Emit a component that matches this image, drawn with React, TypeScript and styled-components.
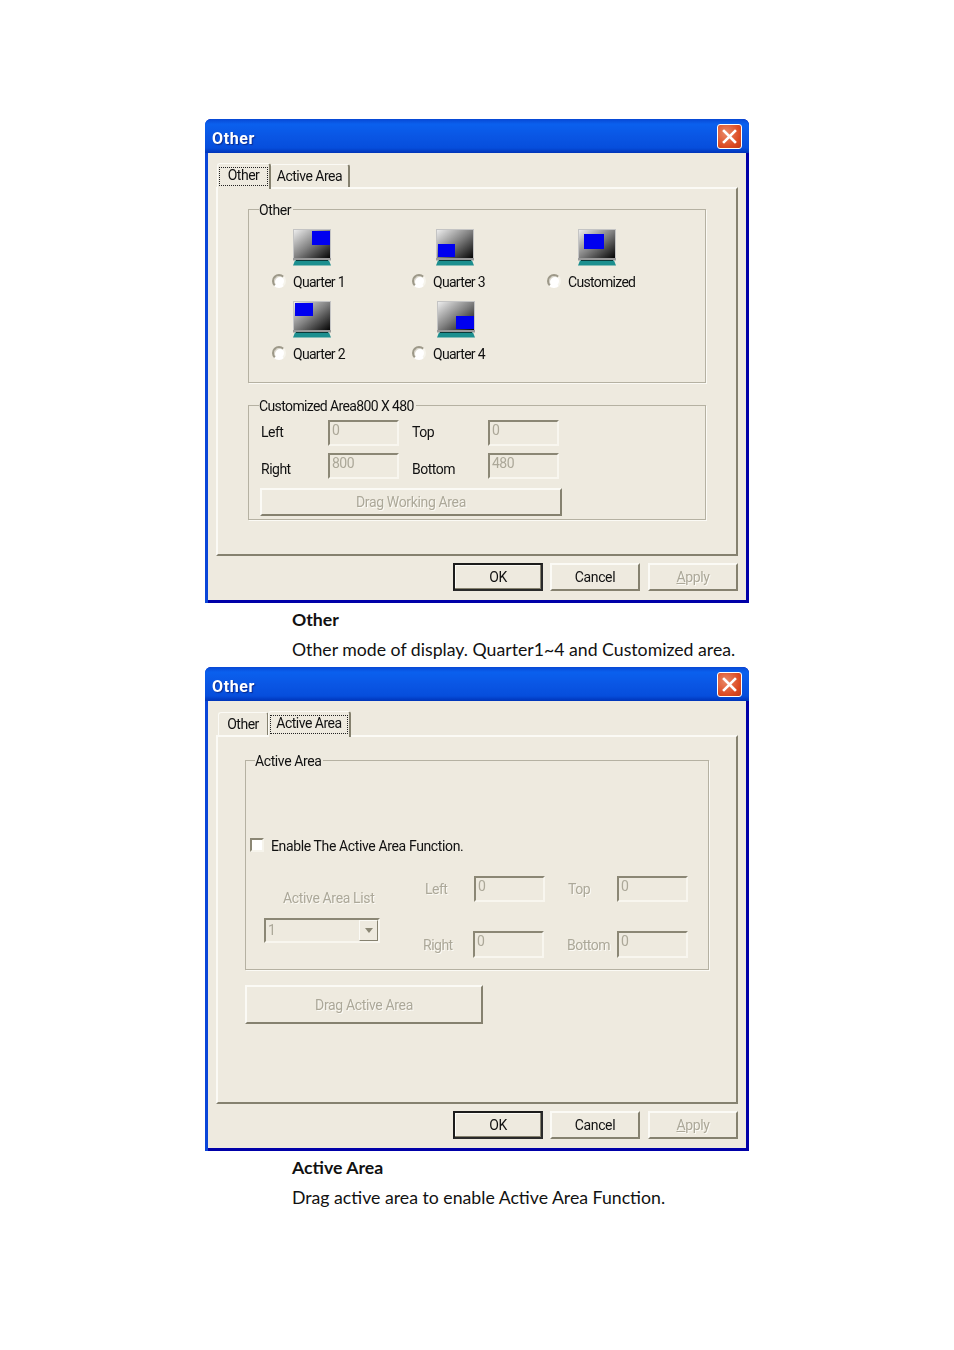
import React from "react";
import styled, { createGlobalStyle } from "styled-components";

const Global = createGlobalStyle`
  html, body { margin: 0; padding: 0; background: #fff; }
  #root { width: 954px; height: 1350px; overflow: hidden; }
`;

const FACE = "#eeeadf";
const SHADE = "#85816f";
const DIM = "#aca899";

const Page = styled.main`
  box-sizing: border-box;
  height: 1350px;
  padding: 119px 0 0 205px;
  font-family: Roboto, "Liberation Sans", sans-serif;
  letter-spacing: -0.5px;
  color: #111;
`;

const Dialog = styled.section`
  box-sizing: border-box;
  width: 544px;
  height: 484px;
  display: flex;
  flex-direction: column;
  border-radius: 6px 6px 0 0;
  background: linear-gradient(90deg, #0a45d8 0, #0a45d8 3px, #0000a8 3px);
  overflow: hidden;
  filter: blur(0.35px);
`;

const TitleBar = styled.header`
  flex: none;
  height: 34px;
  box-sizing: border-box;
  padding: 0 7px 0 7px;
  display: flex;
  align-items: center;
  justify-content: space-between;
  background: linear-gradient(180deg, #0848d4 0, #0a60ee 15%, #0a56e4 50%, #064edc 85%, #0034b8 100%);
`;

const Title = styled.h1`
  margin: 0;
  padding-top: 4px;
  font: bold 16px Roboto, "Liberation Sans", sans-serif;
  letter-spacing: 0.6px;
  color: #fff;
  text-shadow: 1px 1px 1px #0a2a90;
`;

const CloseButton = styled.button`
  width: 25px;
  height: 25px;
  padding: 0;
  border: 1px solid #fff;
  border-radius: 3px;
  background: radial-gradient(circle at 35% 35%, #ea8a68, #dc4a22 65%, #c03a18);
  display: grid;
  place-items: center;
`;

const Body = styled.div`
  flex: 1;
  box-sizing: border-box;
  margin: 0 3px 3px 3px;
  padding: 10px 8px 0 8px;
  background: ${FACE};
  display: flex;
  flex-direction: column;
`;

const Tabs = styled.div`
  flex: none;
  height: 24px;
  display: flex;
  align-items: flex-end;
  padding-left: 2px;
  position: relative;
  z-index: 1;
`;

const Tab = styled.div<{ $active?: boolean; $w: number }>`
  box-sizing: border-box;
  width: ${(p) => p.$w}px;
  height: ${(p) => (p.$active ? 26 : 23)}px;
  margin: 0 ${(p) => (p.$active ? -1 : 0)}px ${(p) => (p.$active ? -2 : 0)}px ${(p) => (p.$active ? -1 : 0)}px;
  padding: ${(p) => (p.$active ? "3px 1px 0" : "3px 0 0")};
  border: 1px solid #fbfaf5;
  border-bottom: 0;
  border-right: 2px solid ${SHADE};
  border-radius: 3px 3px 0 0;
  background: ${FACE};
  font-size: 14px;
  line-height: 16px;
  text-align: center;
  position: relative;
  z-index: ${(p) => (p.$active ? 2 : 1)};
`;

const Focus = styled.span`
  display: block;
  height: 19px;
  line-height: 15px;
  box-sizing: border-box;
  border: 1px dotted #222;
`;

const Panel = styled.div<{ $pad: string }>`
  flex: none;
  box-sizing: border-box;
  height: 369px;
  padding: ${(p) => p.$pad};
  border-style: solid;
  border-width: 2px;
  border-color: #fbfaf5 ${SHADE} ${SHADE} #fbfaf5;
`;

const Group = styled.fieldset<{ $w: number; $h: number; $pad: string; $gap?: number }>`
  box-sizing: border-box;
  display: block;
  min-width: 0;
  position: relative;
  width: ${(p) => p.$w}px;
  height: ${(p) => p.$h}px;
  margin: ${(p) => p.$gap ?? 0}px 0 0 0;
  padding: ${(p) => p.$pad};
  border: 1px solid #b5b1a2;
  box-shadow: 1px 1px 0 #fbfaf5;
`;

const Legend = styled.span<{ $left: number; $tight?: boolean }>`
  position: absolute;
  top: -8px;
  left: ${(p) => p.$left}px;
  padding-right: 2px;
  background: ${FACE};
  font-size: 14px;
  line-height: 16px;
  letter-spacing: ${(p) => (p.$tight ? "-0.62px" : "-0.4px")};
  white-space: nowrap;
`;

const OptionGrid = styled.div`
  display: grid;
  grid-template-columns: 140px 135px 120px;
  row-gap: 13px;
`;

const Option = styled.div`
  display: flex;
  flex-direction: column;
  gap: 8px;
`;

const IconSlot = styled.div<{ $x: number }>`
  height: 37px;
  padding-left: ${(p) => p.$x}px;
`;

const RadioRow = styled.label`
  display: flex;
  align-items: center;
  gap: 7px;
  height: 14px;
  font-size: 14px;
  letter-spacing: -0.7px;
`;

const RadioLabel = styled.span`
  position: relative;
  top: 1px;
`;

const Radio = styled.span`
  box-sizing: border-box;
  width: 14px;
  height: 14px;
  border-radius: 50%;
  background: #fff;
  border: 2px solid;
  border-color: #9c9888 #f6f4ec #fff #9c9888;
  box-shadow: inset 1px 1px 0 #d8d4c8;
`;

const CheckBox = styled.span`
  box-sizing: border-box;
  display: block;
  width: 14px;
  height: 14px;
  background: #fff;
  border: 2px solid;
  border-color: #8b8775 #f6f4ec #f6f4ec #8b8775;
`;

const CheckRow = styled.label`
  display: flex;
  align-items: center;
  gap: 7px;
  height: 14px;
  padding-left: 4px;
  font-size: 14px;
  letter-spacing: -0.37px;
`;

const CheckText = styled.span`
  position: relative;
  top: 1px;
`;

const FieldGrid = styled.div`
  display: grid;
  grid-template-columns: 67px 84px 76px 71px;
  grid-template-rows: 26px 26px;
  row-gap: 7px;
  align-items: center;
`;

const FieldLabel = styled.span<{ $down?: number; $dim?: boolean; $x?: number }>`
  font-size: 14px;
  position: relative;
  top: ${(p) => p.$down ?? 0}px;
  padding-left: ${(p) => p.$x ?? 0}px;
  color: ${(p) => (p.$dim ? DIM : "inherit")};
  text-shadow: ${(p) => (p.$dim ? "1px 1px 0 #fbfaf5" : "none")};
`;

const TextBox = styled.div<{ $x?: number; $h?: number }>`
  box-sizing: border-box;
  width: 71px;
  height: ${(p) => p.$h ?? 26}px;
  margin-left: ${(p) => p.$x ?? 0}px;
  padding: 0 0 0 2px;
  border: 2px solid;
  border-color: #8b8775 #f8f6ef #f8f6ef #8b8775;
  background: ${FACE};
  font-size: 14px;
  line-height: 17px;
  color: ${DIM};
`;

const RaisedButton = styled.div<{ $w: number; $h?: number; $dim?: boolean; $top?: number; $x?: number }>`
  box-sizing: border-box;
  width: ${(p) => p.$w}px;
  height: ${(p) => p.$h ?? 28}px;
  margin: ${(p) => p.$top ?? 0}px 0 0 ${(p) => p.$x ?? 0}px;
  display: flex;
  align-items: center;
  justify-content: center;
  border: 2px solid;
  border-color: #fbfaf5 ${SHADE} ${SHADE} #fbfaf5;
  font-size: 14px;
  letter-spacing: -0.35px;
  color: ${(p) => (p.$dim ? DIM : "#111")};
  text-shadow: ${(p) => (p.$dim ? "1px 1px 0 #fbfaf5" : "none")};
`;

const DefaultButton = styled(RaisedButton)`
  border-color: #1c1c1c #2a2a2a #2a2a2a #1c1c1c;
  box-shadow: inset -1px -1px 0 ${SHADE}, inset 1px 1px 0 #fbfaf5;
`;

const Footer = styled.div`
  flex: none;
  margin-top: 7px;
  display: flex;
  justify-content: flex-end;
  gap: 7px;
`;

const Underlined = styled.span`
  text-decoration: underline;
`;

const ActiveRow = styled.div`
  display: flex;
  margin: 24px 0 0 18px;
`;

const ListColumn = styled.div`
  width: 116px;
  flex: none;
  margin-right: 43px;
`;

const ListLabel = styled.div`
  margin: 14px 0 12px;
  padding-left: 19px;
  height: 16px;
  line-height: 16px;
  font-size: 14px;
  letter-spacing: -0.35px;
  white-space: nowrap;
  color: ${DIM};
  text-shadow: 1px 1px 0 #fbfaf5;
`;

const Combo = styled.div`
  box-sizing: border-box;
  width: 116px;
  height: 25px;
  padding: 0 0 0 2px;
  display: flex;
  justify-content: space-between;
  border: 2px solid;
  border-color: #8b8775 #f8f6ef #f8f6ef #8b8775;
  font-size: 14px;
  line-height: 20px;
  color: ${DIM};
`;

const ComboArrow = styled.span`
  box-sizing: border-box;
  width: 19px;
  height: 21px;
  display: grid;
  place-items: center;
  border: 1px solid;
  border-color: #fbfaf5 ${SHADE} ${SHADE} #fbfaf5;
  &::after {
    content: "";
    border: 4px solid transparent;
    border-top: 5px solid #8b8775;
    border-bottom: 0;
  }
`;

const AreaGrid = styled.div`
  display: grid;
  grid-template-columns: 50px 94px 50px 71px;
  grid-template-rows: 26px 27px;
  row-gap: 29px;
  align-items: center;
`;

const Caption = styled.div`
  box-sizing: border-box;
  height: 64px;
  padding: 2px 0 0 87px;
  font-family: Lato, "Open Sans", sans-serif;
  font-size: 17.7px;
  line-height: 29.5px;
  letter-spacing: 0;
  color: #111;
`;

const CaptionHead = styled.div`
  font-weight: 700;
`;

type Area = [number, number, number, number];

const Monitor = ({ area, id }: { area: Area; id: string }) => (
  <svg width="38" height="37" viewBox="0 0 38 37">
    <defs>
      <linearGradient id={id} x1="0" y1="0" x2="1" y2="1">
        <stop offset="0" stopColor="#f0f0f0" />
        <stop offset="0.5" stopColor="#808080" />
        <stop offset="1" stopColor="#000000" />
      </linearGradient>
    </defs>
    <rect x="0.5" y="0.5" width="37" height="29" fill={`url(#${id})`} stroke="#c4c4c4" />
    <rect x={area[0]} y={area[1]} width={area[2]} height={area[3]} fill="#0000f0" />
    <rect x="0" y="29" width="38" height="2.5" fill="#9a9a9a" />
    <path d="M2 31.5H36L38 36.5H0Z" fill="#1c8f8f" />
    <path d="M3 31.5H35" stroke="#0a3a3a" strokeWidth="1" />
  </svg>
);

const CloseGlyph = () => (
  <svg width="15" height="15" viewBox="0 0 15 15">
    <path d="M2 2L13 13M13 2L2 13" stroke="#fff" strokeWidth="2.6" strokeLinecap="square" />
  </svg>
);

const Titled = ({ children }: { children: React.ReactNode }) => (
  <Dialog>
    <TitleBar>
      <Title>Other</Title>
      <CloseButton aria-label="Close">
        <CloseGlyph />
      </CloseButton>
    </TitleBar>
    <Body>
      {children}
      <Footer>
        <DefaultButton $w={90}>OK</DefaultButton>
        <RaisedButton $w={90}>Cancel</RaisedButton>
        <RaisedButton $w={90} $x={1} $dim>
          <span>
            <Underlined>A</Underlined>pply
          </span>
        </RaisedButton>
      </Footer>
    </Body>
  </Dialog>
);

const options: { label: string; x: number; area: Area; id: string }[] = [
  { label: "Quarter 1", x: 21, area: [19, 2, 18, 14], id: "q1" },
  { label: "Quarter 3", x: 24, area: [2, 15, 17, 13], id: "q3" },
  { label: "Customized", x: 31, area: [6, 5, 20, 15], id: "qc" },
  { label: "Quarter 2", x: 21, area: [2, 2, 18, 13], id: "q2" },
  { label: "Quarter 4", x: 25, area: [19, 15, 18, 13], id: "q4" },
];

const App = () => (
  <Page>
    <Global />
    <Titled>
      <Tabs>
        <Tab $active $w={54}>
          <Focus>Other</Focus>
        </Tab>
        <Tab $w={80}>Active Area</Tab>
      </Tabs>
      <Panel $pad="20px 0 0 30px">
        <Group $w={458} $h={174} $pad="19px 0 0 23px">
          <Legend $left={10}>Other</Legend>
          <OptionGrid>
            {options.map((o) => (
              <Option key={o.id}>
                <IconSlot $x={o.x}>
                  <Monitor area={o.area} id={o.id} />
                </IconSlot>
                <RadioRow>
                  <Radio />
                  <RadioLabel>{o.label}</RadioLabel>
                </RadioRow>
              </Option>
            ))}
          </OptionGrid>
        </Group>
        <Group $w={458} $h={115} $gap={22} $pad="14px 0 0 12px">
          <Legend $left={10} $tight>Customized Area800 X 480</Legend>
          <FieldGrid>
            <FieldLabel $down={-1}>Left</FieldLabel>
            <TextBox>0</TextBox>
            <FieldLabel $down={-1}>Top</FieldLabel>
            <TextBox>0</TextBox>
            <FieldLabel $down={3}>Right</FieldLabel>
            <TextBox>800</TextBox>
            <FieldLabel $down={3}>Bottom</FieldLabel>
            <TextBox>480</TextBox>
          </FieldGrid>
          <RaisedButton $w={302} $top={9} $x={-1} $dim>
            Drag Working Area
          </RaisedButton>
        </Group>
      </Panel>
    </Titled>
    <Caption>
      <CaptionHead>Other</CaptionHead>
      <div>Other mode of display. Quarter1~4 and Customized area.</div>
    </Caption>
    <Titled>
      <Tabs>
        <Tab $w={51}>Other</Tab>
        <Tab $active $w={83}>
          <Focus>Active Area</Focus>
        </Tab>
      </Tabs>
      <Panel $pad="23px 0 0 27px">
        <Group $w={464} $h={210} $pad="77px 0 0 0">
          <Legend $left={9}>Active Area</Legend>
          <CheckRow>
            <CheckBox />
            <CheckText>Enable The Active Area Function.</CheckText>
          </CheckRow>
          <ActiveRow>
            <ListColumn>
              <ListLabel>Active Area List</ListLabel>
              <Combo>
                1
                <ComboArrow />
              </Combo>
            </ListColumn>
            <AreaGrid>
              <FieldLabel $dim $x={2}>Left</FieldLabel>
              <TextBox $x={1}>0</TextBox>
              <FieldLabel $dim $x={1}>Top</FieldLabel>
              <TextBox>0</TextBox>
              <FieldLabel $dim>Right</FieldLabel>
              <TextBox $h={27}>0</TextBox>
              <FieldLabel $dim>Bottom</FieldLabel>
              <TextBox $h={27}>0</TextBox>
            </AreaGrid>
          </ActiveRow>
        </Group>
        <RaisedButton $w={238} $h={39} $top={15} $dim>
          Drag Active Area
        </RaisedButton>
      </Panel>
    </Titled>
    <Caption>
      <CaptionHead>Active Area</CaptionHead>
      <div>Drag active area to enable Active Area Function.</div>
    </Caption>
  </Page>
);

export default App;
